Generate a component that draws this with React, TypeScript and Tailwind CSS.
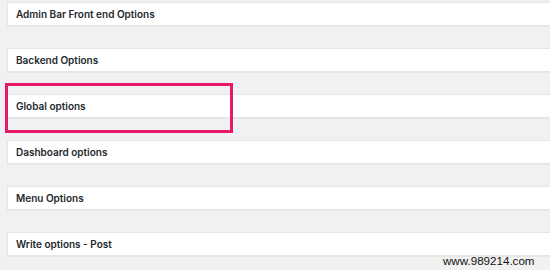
import React from "react";

const rows = [
  "Admin Bar Front end Options",
  "Backend Options",
  "Global options",
  "Dashboard options",
  "Menu Options",
  "Write options - Post",
];

export default function App() {
  return (
    <div className="relative w-[550px] h-[270px] overflow-hidden bg-[#f1f1f1]">
      <div className="flex flex-col gap-[22px] pt-[2px] pl-[7px] -mr-[10px]">
        {rows.map((r) => (
          <div
            key={r}
            className="h-[24px] bg-white border border-[#e5e5e5] shadow-[0_1px_1px_rgba(0,0,0,0.04)] flex items-center pl-[8px]"
          >
            <span
              className="text-[10px] font-semibold text-[#23282d] leading-none"
              style={{ fontFamily: "Inter, 'Liberation Sans', sans-serif" }}
            >
              {r}
            </span>
          </div>
        ))}
      </div>
      <div className="absolute left-[5px] top-[83px] w-[228px] h-[50px] border-[3px] border-[#e6196b]" />
      <div
        className="absolute left-[443px] top-[255px] text-[11.6px] leading-none text-[#111]"
        style={{ fontFamily: "'Liberation Sans', Arial, sans-serif" }}
      >
        www.989214.com
      </div>
    </div>
  );
}
